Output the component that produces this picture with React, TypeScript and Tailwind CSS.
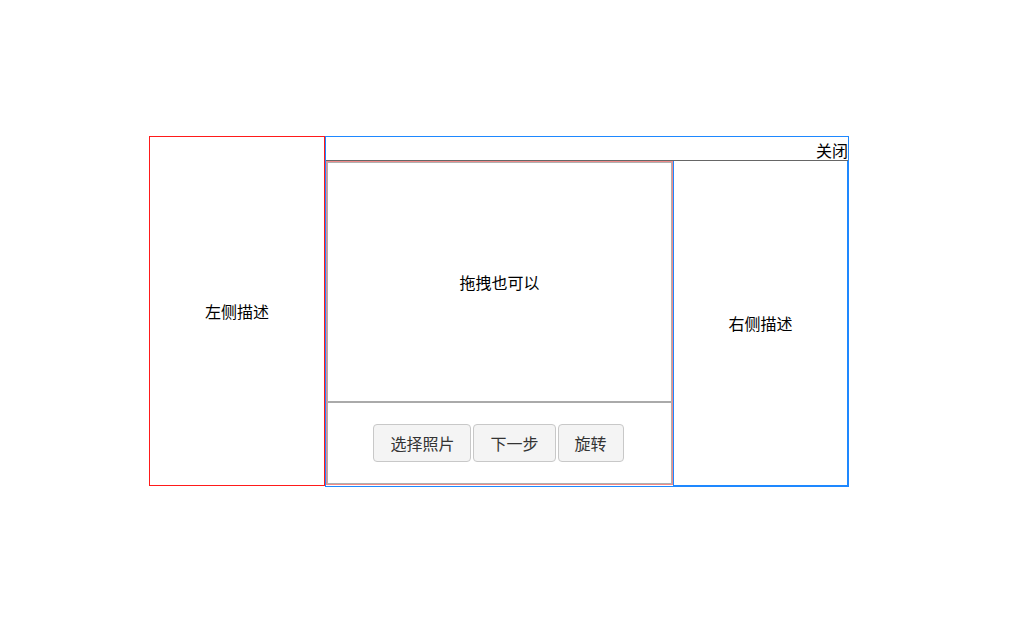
import * as React from "react";

const font = { fontFamily: '"Noto Sans CJK SC", "Noto Sans", sans-serif' };

function Btn({ label }: { label: string }) {
  return (
    <button className="h-[38px] px-[16px] border border-[#c8c8c8] rounded-[4px] bg-[#f4f4f4] text-[#333] text-[16px] leading-none">
      {label}
    </button>
  );
}

export default function App() {
  return (
    <div className="w-[1026px] h-[618px] bg-white text-black text-[16px]" style={font}>
      <div className="pt-[136px] pl-[149px] flex">
        {/* left */}
        <div className="w-[176px] h-[350px] border border-[#ff1a1a] flex items-center justify-center">
          左侧描述
        </div>

        {/* dialog */}
        <div className="w-[524px] h-[351px] border border-[#1e88ff] flex flex-col">
          <div className="h-[24px] border-b border-[#666] text-right leading-[26px]">关闭</div>
          <div className="flex flex-1">
            <div className="w-[347px] h-[324px] border border-[#f08a8a]">
              <div className="h-full border border-[#b0b0b0] flex flex-col">
                <div className="h-[240px] border-b-2 border-[#aaa] flex items-center justify-center">
                  拖拽也可以
                </div>
                <div className="flex-1 flex items-center justify-center gap-[2px] pr-[2px]">
                  <Btn label="选择照片" />
                  <Btn label="下一步" />
                  <Btn label="旋转" />
                </div>
              </div>
            </div>
            <div className="w-[175px] border-l border-r border-b border-[#1e88ff] flex items-center justify-center">
              右侧描述
            </div>
          </div>
        </div>
      </div>
    </div>
  );
}
